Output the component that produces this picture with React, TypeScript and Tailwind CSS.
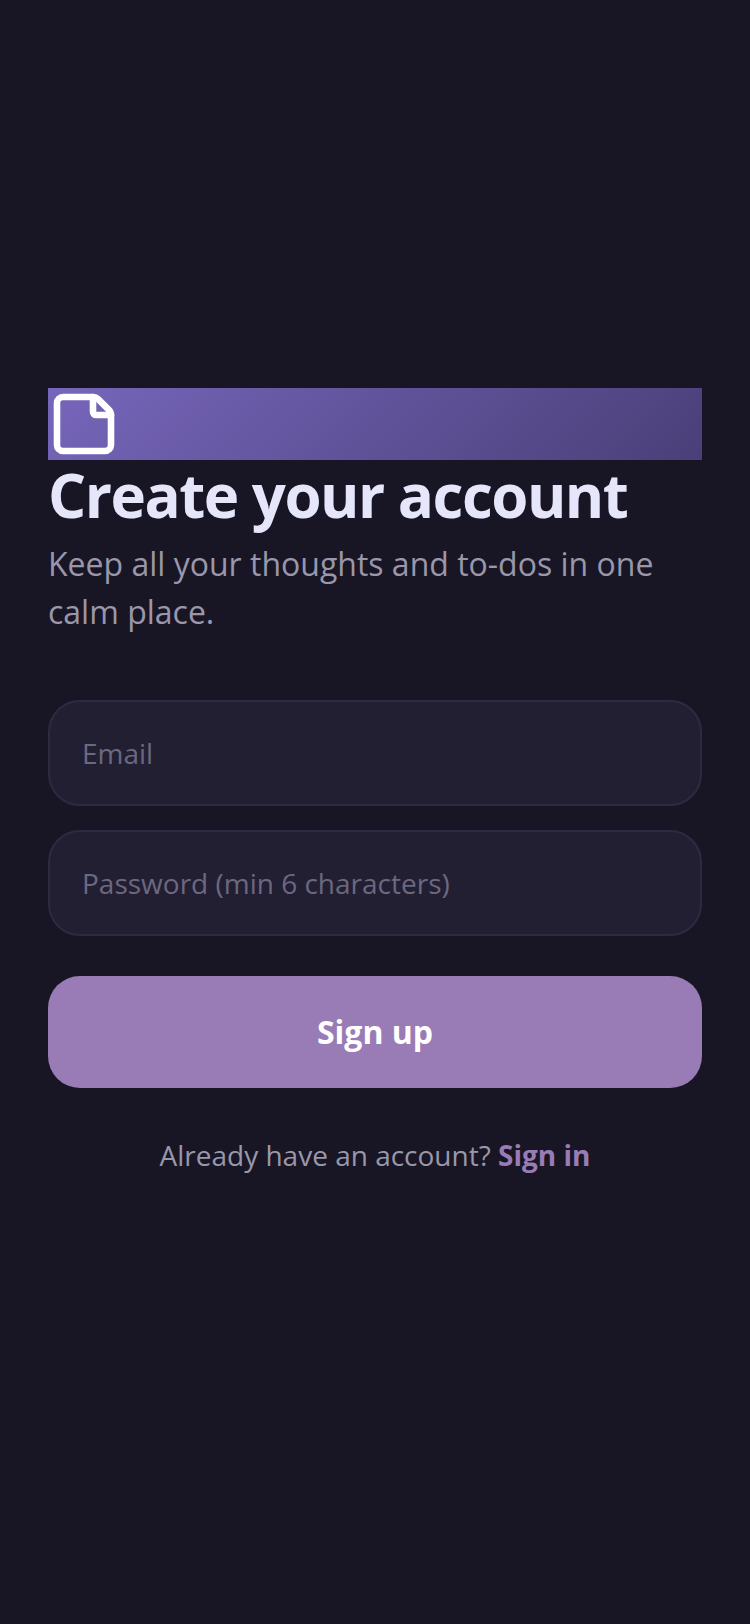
import { StickyNote } from "lucide-react";

function App() {
  return (
    <div className="min-h-screen w-full bg-[#181625] px-12 pb-[60px] flex flex-col justify-center font-['Open_Sans',sans-serif]">
      <div className="h-[72px] bg-[linear-gradient(135deg,#7766bb,#4a3f78)]">
        <StickyNote size={72} color="#ffffff" strokeWidth={2.2} />
      </div>
      <h1 className="text-[60px] leading-[70px] font-bold text-[#e6e6fa] tracking-tight">
        Create your account
      </h1>
      <p className="mt-[10px] text-[32px] leading-[48px] text-[#9a97aa]">
        Keep all your thoughts and to-dos in one calm place.
      </p>
      <div className="mt-16 flex flex-col gap-6">
        <input
          placeholder="Email"
          className="h-[106px] w-full rounded-[32px] border-2 border-[#2d2a42] bg-[#221f33] px-8 text-[28px] outline-none placeholder:text-[#6b6880]"
        />
        <input
          placeholder="Password (min 6 characters)"
          className="h-[106px] w-full rounded-[32px] border-2 border-[#2d2a42] bg-[#221f33] px-8 text-[28px] outline-none placeholder:text-[#6b6880]"
        />
      </div>
      <button className="mt-10 h-[112px] w-full rounded-[32px] bg-[#997cb5] text-[32px] font-bold text-white">
        Sign up
      </button>
      <p className="mt-[46px] text-center text-[28px] leading-[42px] text-[#9a97aa]">
        Already have an account?{" "}
        <span className="font-bold text-[#997cb5]">Sign in</span>
      </p>
    </div>
  );
}

export default App;
